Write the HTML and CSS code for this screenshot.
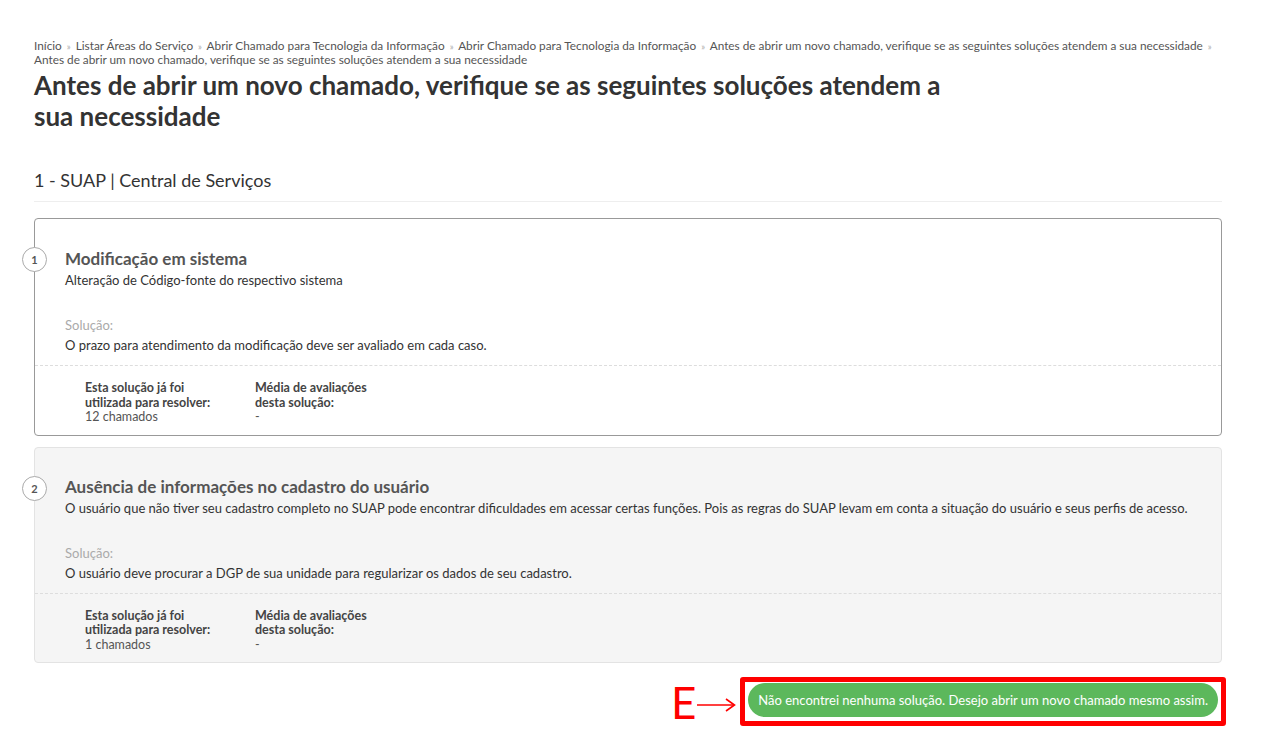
FILE: index.html
```html
<!DOCTYPE html>
<html lang="pt-BR">
<head>
<meta charset="utf-8">
<title>Antes de abrir um novo chamado</title>
<link rel="stylesheet" href="styles.css">
</head>
<body>
<div class="page">
  <nav class="breadcrumbs">
    <a>Início</a> <span class="sep">»</span> <a>Listar Áreas do Serviço</a> <span class="sep">»</span> <a>Abrir Chamado para Tecnologia da Informação</a> <span class="sep">»</span> <a>Abrir Chamado para Tecnologia da Informação</a> <span class="sep">»</span> <a>Antes de abrir um novo chamado, verifique se as seguintes soluções atendem a sua necessidade</a> <span class="sep">»</span> <span class="current">Antes de abrir um novo chamado, verifique se as seguintes soluções atendem a sua necessidade</span>
  </nav>
  <h1 class="title">Antes de abrir um novo chamado, verifique se as seguintes soluções atendem a sua necessidade</h1>

  <h2 class="section">1 - SUAP | Central de Serviços</h2>

  <div class="card card-active">
    <span class="num">1</span>
    <div class="card-body">
      <h3 class="card-title">Modificação em sistema</h3>
      <p class="card-desc">Alteração de Código-fonte do respectivo sistema</p>
      <p class="sol-label">Solução:</p>
      <p class="sol-text">O prazo para atendimento da modificação deve ser avaliado em cada caso.</p>
    </div>
    <div class="card-foot">
      <div class="stat">
        <strong>Esta solução já foi<br>utilizada para resolver:</strong>
        <span>12 chamados</span>
      </div>
      <div class="stat">
        <strong>Média de avaliações<br>desta solução:</strong>
        <span>-</span>
      </div>
    </div>
  </div>

  <div class="card card-muted">
    <span class="num">2</span>
    <div class="card-body">
      <h3 class="card-title">Ausência de informações no cadastro do usuário</h3>
      <p class="card-desc">O usuário que não tiver seu cadastro completo no SUAP pode encontrar dificuldades em acessar certas funções. Pois as regras do SUAP levam em conta a situação do usuário e seus perfis de acesso.</p>
      <p class="sol-label">Solução:</p>
      <p class="sol-text">O usuário deve procurar a DGP de sua unidade para regularizar os dados de seu cadastro.</p>
    </div>
    <div class="card-foot">
      <div class="stat">
        <strong>Esta solução já foi<br>utilizada para resolver:</strong>
        <span>1 chamados</span>
      </div>
      <div class="stat">
        <strong>Média de avaliações<br>desta solução:</strong>
        <span>-</span>
      </div>
    </div>
  </div>

  <div class="actions">
    <span class="marker">E</span>
    <svg class="arrow" width="39" height="14" viewBox="0 0 39 14" aria-hidden="true">
      <line x1="0" y1="7" x2="37" y2="7" stroke="#ff0000" stroke-width="1.6"/>
      <polyline points="29,1 37.5,7 29,13" fill="none" stroke="#ff0000" stroke-width="1.6"/>
    </svg>
    <span class="highlight">
      <a class="btn-success">Não encontrei nenhuma solução. Desejo abrir um novo chamado mesmo assim.</a>
    </span>
  </div>
</div>
</body>
</html>
```

FILE: styles.css
```css
* { box-sizing: border-box; }
html, body { margin: 0; padding: 0; background: #fff; }
body {
  font-family: Lato, "Open Sans", "Liberation Sans", sans-serif;
  color: #333;
}
.page {
  padding: 39px 41px 30px 34px;
}
.breadcrumbs {
  font-size: 11.8px;
  line-height: 14px;
  color: #555;
}
.breadcrumbs a { color: #555; text-decoration: none; }
.breadcrumbs .sep {
  color: #aaa;
  font-size: 9px;
  line-height: 0;
  margin: 0 2px;
}
.breadcrumbs .current { color: #555; }
.title {
  margin: 3px 0 0;
  max-width: 930px;
  font-size: 26px;
  line-height: 31px;
  font-weight: 700;
  color: #333;
}
.section {
  margin: 37px 0 16px;
  padding-bottom: 10px;
  font-size: 18px;
  line-height: 22px;
  font-weight: 400;
  color: #333;
  border-bottom: 1px solid #eee;
}
.card {
  position: relative;
  border-radius: 4px;
  margin-bottom: 11px;
}
.card-active {
  border: 1px solid #999;
  background: #fff;
}
.card-muted {
  border: 1px solid #e3e3e3;
  background: #f5f5f5;
  margin-bottom: 14px;
}
.num {
  position: absolute;
  left: -13px;
  top: 28px;
  width: 25px;
  height: 25px;
  border-radius: 50%;
  border: 1px solid #aaa;
  background: #fff;
  color: #555;
  font-size: 11px;
  font-weight: 700;
  display: flex;
  align-items: center;
  justify-content: center;
}
.card-body {
  padding: 29px 30px 10px 30px;
}
.card-muted .card-body {
  padding-top: 28px;
}
.card-title {
  margin: 0;
  font-size: 17px;
  line-height: 22px;
  font-weight: 700;
  color: #555;
}
.card-desc, .sol-label, .sol-text {
  margin: 0;
  font-size: 13px;
  line-height: 20px;
  color: #333;
}
.sol-label {
  margin-top: 25px;
  color: #aaa;
}
.card-foot {
  display: flex;
  border-top: 1px dashed #ddd;
  padding: 15px 50px 10px;
}
.stat {
  width: 170px;
  display: flex;
  flex-direction: column;
  font-size: 12.5px;
  line-height: 14.5px;
  color: #555;
}
.stat strong { font-weight: 700; color: #444; }
.actions {
  display: flex;
  justify-content: flex-end;
  align-items: center;
  margin-right: -4px;
}
.marker {
  color: #ff0000;
  font-size: 44px;
  line-height: 40px;
  font-weight: 400;
  margin-right: 1px;
}
.arrow {
  margin-right: 4px;
  margin-top: 6px;
}
.highlight {
  display: inline-flex;
  border: 5px solid #ff0000;
  border-radius: 3px;
  padding: 1px 3px 4px;
}
.btn-success {
  display: inline-block;
  background: #5cb85c;
  color: #fff;
  font-size: 13px;
  line-height: 18px;
  padding: 8px 10px;
  border-radius: 17px;
  text-decoration: none;
}
```
